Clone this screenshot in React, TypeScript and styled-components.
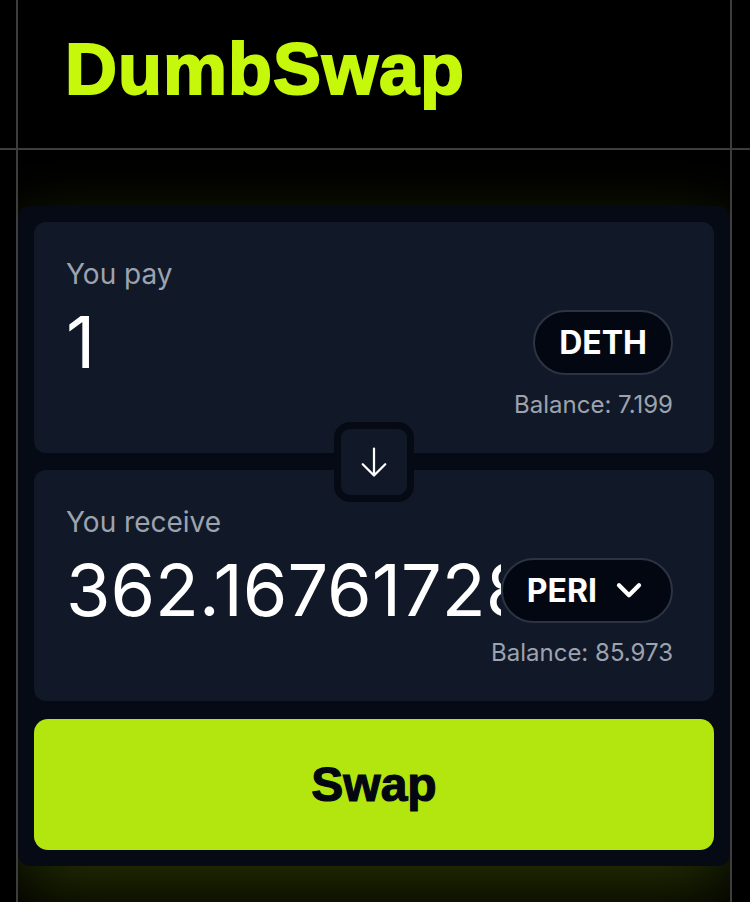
import React, { useState } from 'react';
import styled, { createGlobalStyle } from 'styled-components';

// --- Estilos globais ---
const GlobalStyle = createGlobalStyle`
  html, body {
    margin: 0;
    padding: 0;
    background: #000;
  }
  body {
    font-family: Inter, "Noto Sans", sans-serif;
    -webkit-font-smoothing: antialiased;
  }
  * { box-sizing: border-box; }
`;

// --- Layout da página ---
const Page = styled.div`
  min-height: 100vh;
  display: flex;
  flex-direction: column;
  background: #000;
`;

const HeaderBar = styled.header`
  border-bottom: 2px solid #3d3d3d;
`;

const Column = styled.div`
  margin: 0 18px 0 16px;
  border-left: 2px solid #3d3d3d;
  border-right: 2px solid #3d3d3d;
`;

const HeaderInner = styled(Column)`
  padding: 29px 0 39px 47px;
`;

const Title = styled.h1`
  margin: 0;
  font-family: "Liberation Sans", Arial, sans-serif;
  font-weight: 700;
  font-size: 72px;
  line-height: 80px;
  letter-spacing: 1px;
  color: #c5f80a;
  -webkit-text-stroke: 2px #c5f80a;
`;

const Main = styled.main`
  flex: 1;
  display: flex;
  flex-direction: column;
`;

const MainInner = styled(Column)`
  flex: 1;
  padding-top: 56px;
  overflow: hidden;
`;

// --- Cartão de swap ---
const Card = styled.section`
  background: #060a14;
  border-radius: 12px;
  padding: 16px;
  box-shadow: 0 22px 70px rgba(180, 232, 14, 0.22);
`;

const PanelStack = styled.div`
  position: relative;
  display: flex;
  flex-direction: column;
  gap: 17px;
`;

const Panel = styled.div`
  background: #111827;
  border-radius: 12px;
  padding: 32px 41px 32px 32px;
`;

const Label = styled.div`
  font-size: 28px;
  line-height: 40px;
  color: #9ca3af;
  margin-bottom: 8px;
`;

const Row = styled.div`
  display: flex;
  align-items: center;
  height: 80px;
`;

const AmountInput = styled.input`
  flex: 1;
  min-width: 0;
  padding: 0;
  border: none;
  outline: none;
  background: transparent;
  color: #fff;
  font-family: Inter, sans-serif;
  font-size: 72px;
  font-weight: 400;
  line-height: 80px;
  height: 80px;
`;

const TokenPill = styled.button<{ $menu?: boolean }>`
  flex-shrink: 0;
  display: inline-flex;
  align-items: center;
  gap: 16px;
  height: 65px;
  padding: 0 ${(p) => (p.$menu ? '26px' : '24px')} 0 24px;
  border-radius: 999px;
  border: 2px solid #2c3443;
  background: #030712;
  color: #fff;
  font-family: Inter, sans-serif;
  font-size: 32px;
  font-weight: 700;
  cursor: pointer;
`;

const Balance = styled.div`
  margin-top: 7px;
  text-align: right;
  font-size: 24px;
  line-height: 32px;
  color: #9ca3af;
`;

const FlipButton = styled.button`
  position: absolute;
  left: 50%;
  top: 50%;
  transform: translate(-50%, -50%);
  width: 80px;
  height: 80px;
  display: flex;
  align-items: center;
  justify-content: center;
  padding: 0;
  border: 7px solid #060a14;
  border-radius: 16px;
  background: #111827;
  color: #fff;
  cursor: pointer;
`;

const SwapButton = styled.button`
  display: flex;
  align-items: center;
  justify-content: center;
  width: 100%;
  height: 131px;
  margin-top: 18px;
  border: none;
  border-radius: 14px;
  background: #b3e60f;
  color: #030712;
  font-family: "Liberation Sans", Arial, sans-serif;
  font-size: 48px;
  font-weight: 700;
  -webkit-text-stroke: 1.2px #030712;
  cursor: pointer;
`;

// --- Ícones ---
const ArrowDownIcon = () => (
  <svg width="36" height="36" viewBox="0 0 24 24" fill="none" stroke="currentColor" strokeWidth="1.5" strokeLinecap="round" strokeLinejoin="round">
    <path d="M19.5 13.5 12 21m0 0-7.5-7.5M12 21V3" />
  </svg>
);

const ChevronDownIcon = () => (
  <svg width="32" height="32" viewBox="0 0 24 24" fill="none" stroke="currentColor" strokeWidth="3.2" strokeLinecap="round" strokeLinejoin="round">
    <path d="M4.5 8.5 12 16l7.5-7.5" />
  </svg>
);

// --- Componente principal ---
const App = () => {
  const [payAmount, setPayAmount] = useState('1');
  const receiveAmount = '362.16761728395';

  return (
    <Page>
      <GlobalStyle />
      <HeaderBar>
        <HeaderInner>
          <Title>DumbSwap</Title>
        </HeaderInner>
      </HeaderBar>

      <Main>
        <MainInner>
          <Card>
            <PanelStack>
              <Panel>
                <Label>You pay</Label>
                <Row>
                  <AmountInput value={payAmount} onChange={(e) => setPayAmount(e.target.value)} />
                  <TokenPill>DETH</TokenPill>
                </Row>
                <Balance>Balance: 7.199</Balance>
              </Panel>

              <FlipButton aria-label="Inverter">
                <ArrowDownIcon />
              </FlipButton>

              <Panel>
                <Label>You receive</Label>
                <Row>
                  <AmountInput value={receiveAmount} readOnly />
                  <TokenPill $menu>
                    PERI
                    <ChevronDownIcon />
                  </TokenPill>
                </Row>
                <Balance>Balance: 85.973</Balance>
              </Panel>
            </PanelStack>

            <SwapButton>Swap</SwapButton>
          </Card>
        </MainInner>
      </Main>
    </Page>
  );
};

export default App;
